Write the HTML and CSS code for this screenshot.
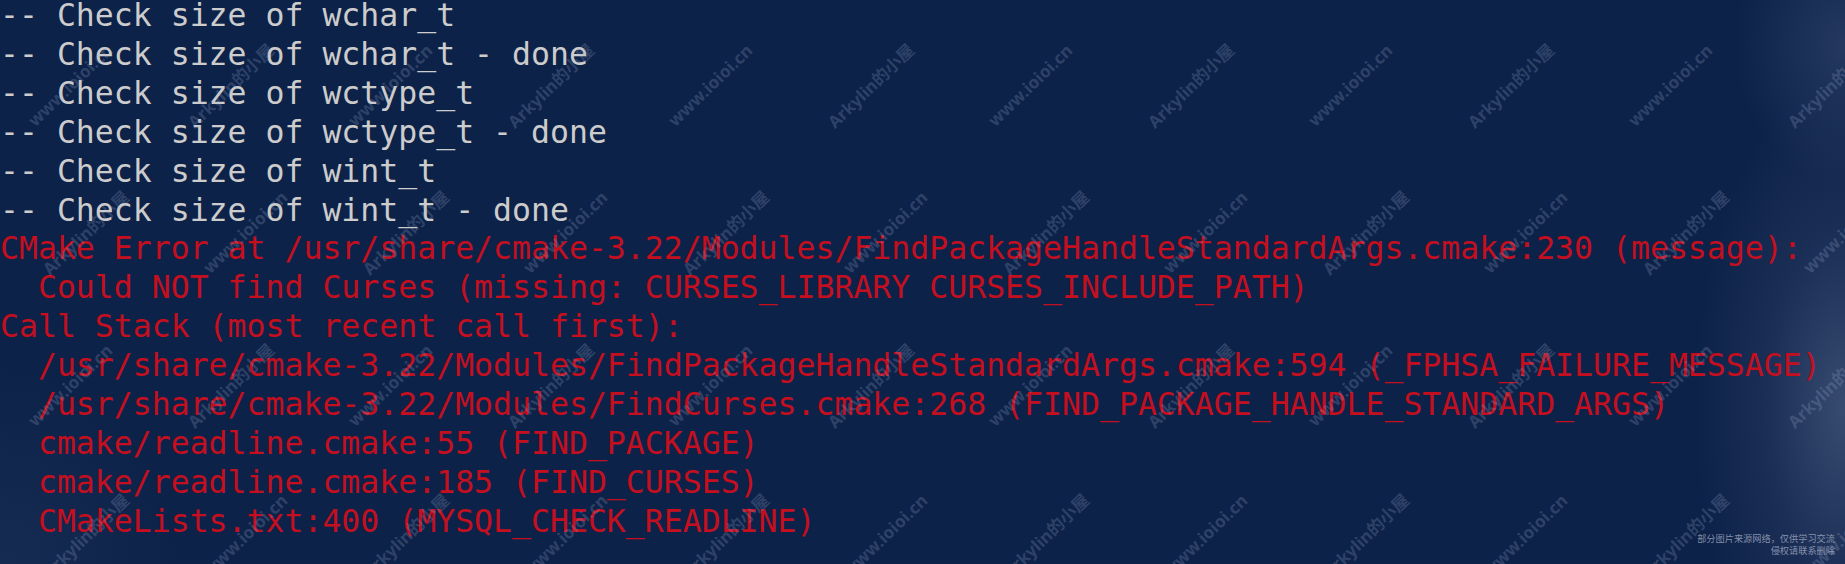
FILE: index.html
```html
<!DOCTYPE html>
<html lang="en">
<head>
<meta charset="utf-8">
<title>Terminal</title>
<link rel="stylesheet" href="styles.css">
</head>
<body>
<div class="screen">
  <div class="term">
    <div class="line ok">-- Check size of wchar_t</div>
    <div class="line ok">-- Check size of wchar_t - done</div>
    <div class="line ok">-- Check size of wctype_t</div>
    <div class="line ok">-- Check size of wctype_t - done</div>
    <div class="line ok">-- Check size of wint_t</div>
    <div class="line ok">-- Check size of wint_t - done</div>
    <div class="line err">CMake Error at /usr/share/cmake-3.22/Modules/FindPackageHandleStandardArgs.cmake:230 (message):</div>
    <div class="line err">  Could NOT find Curses (missing: CURSES_LIBRARY CURSES_INCLUDE_PATH)</div>
    <div class="line err">Call Stack (most recent call first):</div>
    <div class="line err">  /usr/share/cmake-3.22/Modules/FindPackageHandleStandardArgs.cmake:594 (_FPHSA_FAILURE_MESSAGE)</div>
    <div class="line err">  /usr/share/cmake-3.22/Modules/FindCurses.cmake:268 (FIND_PACKAGE_HANDLE_STANDARD_ARGS)</div>
    <div class="line err">  cmake/readline.cmake:55 (FIND_PACKAGE)</div>
    <div class="line err">  cmake/readline.cmake:185 (FIND_CURSES)</div>
    <div class="line err">  CMakeLists.txt:400 (MYSQL_CHECK_READLINE)</div>
  </div>
  <div class="marks" id="marks"></div>
  <div class="notice">
    <div>部分图片来源网络，仅供学习交流</div>
    <div>侵权请联系删除</div>
  </div>
</div>
<script src="app.js"></script>
</body>
</html>
```

FILE: styles.css
```css
html, body {
  margin: 0;
  padding: 0;
}
body {
  width: 1845px;
  height: 564px;
  overflow: hidden;
  background: #0d2249;
}
.screen {
  position: relative;
  width: 1845px;
  height: 564px;
  overflow: hidden;
  background:
    radial-gradient(ellipse 150px 330px at 100% 72%, rgba(70, 88, 125, 0.75) 0%, rgba(50, 68, 108, 0.35) 55%, rgba(13, 34, 73, 0) 100%),
    radial-gradient(ellipse 110px 140px at 100% 8%, rgba(55, 75, 115, 0.55) 0%, rgba(13, 34, 73, 0) 100%),
    radial-gradient(ellipse 180px 200px at 0% 100%, rgba(40, 60, 100, 0.35) 0%, rgba(13, 34, 73, 0) 100%),
    #0d2249;
}
.term {
  margin-top: -4px;
  font-family: "DejaVu Sans Mono", "Liberation Mono", monospace;
  font-size: 31.5px;
  line-height: 38.9px;
}
.line {
  white-space: pre;
}
.ok {
  color: #cccccc;
}
.err {
  color: #c50f1f;
}
.marks {
  position: absolute;
  inset: 0;
  pointer-events: none;
}
.mark {
  position: absolute;
  transform: translate(-50%, -50%) rotate(-44deg);
  font-family: "Noto Sans", "Noto Sans CJK SC", sans-serif;
  font-weight: 700;
  font-size: 17px;
  white-space: nowrap;
  color: rgba(160, 178, 212, 0.24);
}
.notice {
  position: absolute;
  right: 10px;
  bottom: 8px;
  text-align: right;
  font-family: "Noto Sans CJK SC", sans-serif;
  font-size: 9.2px;
  line-height: 12px;
  color: rgba(170, 180, 200, 0.75);
}
```

FILE: app.js
```js
(function () {
  var rows = [
    { y: 85, x0: 70 },
    { y: 232, x0: 245 },
    { y: 385, x0: 70 },
    { y: 535, x0: 245 }
  ];
  var host = document.getElementById('marks');
  rows.forEach(function (r) {
    for (var k = -1; k < 7; k++) {
      var x = r.x0 + 320 * k;
      [[x, 'www.ioioi.cn'], [x + 160, 'Arkylin的小屋']].forEach(function (m) {
        if (m[0] < -80 || m[0] > 1925) return;
        var s = document.createElement('span');
        s.className = 'mark';
        s.textContent = m[1];
        s.style.left = m[0] + 'px';
        s.style.top = r.y + 'px';
        host.appendChild(s);
      });
    }
  });
})();
```
